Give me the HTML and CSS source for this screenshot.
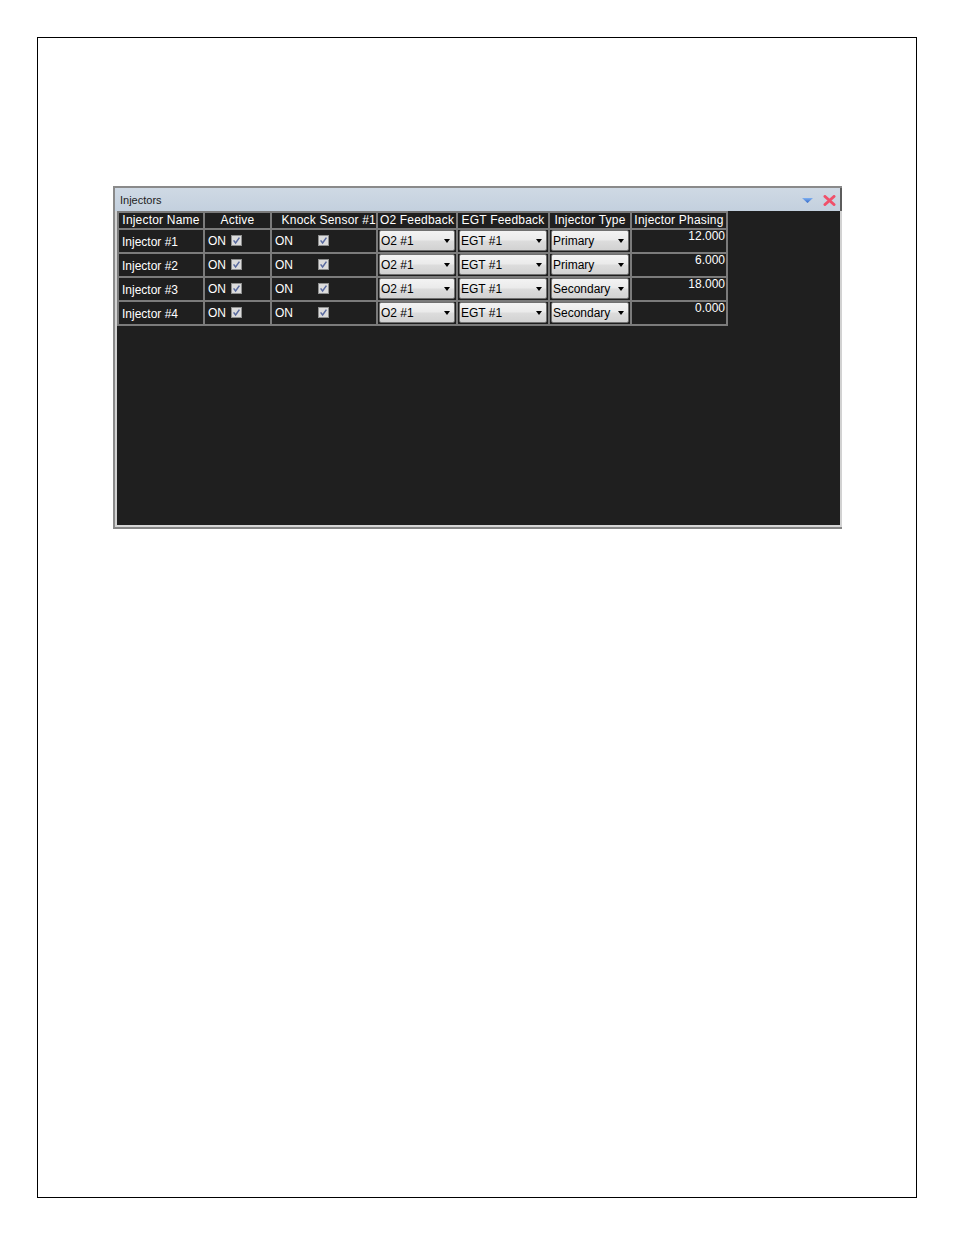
FILE: index.html
```html
<!DOCTYPE html>
<html>
<head>
<meta charset="utf-8">
<title>Injectors</title>
<link rel="stylesheet" href="styles.css">
</head>
<body>
<div class="page">
  <div class="window">
    <div class="titlebar">
      <span class="title">Injectors</span>
      <div class="tools">
        <svg class="ico-min" width="11" height="5" viewBox="0 0 11 5"><defs><linearGradient id="bl" x1="0" y1="0" x2="0" y2="1"><stop offset="0" stop-color="#7fb0f0"/><stop offset="1" stop-color="#2f66c8"/></linearGradient></defs><path d="M0 0 H11 L5.5 5 Z" fill="url(#bl)"/></svg>
        <svg class="ico-close" width="13" height="11" viewBox="0 0 13 11"><path d="M2 1.5 L11 9.5 M11 1.5 L2 9.5" stroke="#f0506a" stroke-width="3" stroke-linecap="round"/></svg>
      </div>
    </div>
    <div class="body">
      <div class="grid">
        <div class="hcell">Injector Name</div>
        <div class="hcell">Active</div>
        <div class="hcell hknock">Knock Sensor #1</div>
        <div class="hcell">O2 Feedback</div>
        <div class="hcell">EGT Feedback</div>
        <div class="hcell">Injector Type</div>
        <div class="hcell">Injector Phasing</div>

        <div class="cell name">Injector #1</div>
        <div class="cell on"><span>ON</span><svg class="chk" width="11" height="11" viewBox="0 0 11 11"><rect x="0.5" y="0.5" width="10" height="10" fill="#dcdcdc" stroke="#8e8f8f"/><path d="M2.6 5.4 L4.6 8 L8.4 2.6" fill="none" stroke="#5a6ba0" stroke-width="1.5"/></svg></div>
        <div class="cell on knock"><span>ON</span><svg class="chk" width="11" height="11" viewBox="0 0 11 11"><rect x="0.5" y="0.5" width="10" height="10" fill="#dcdcdc" stroke="#8e8f8f"/><path d="M2.6 5.4 L4.6 8 L8.4 2.6" fill="none" stroke="#5a6ba0" stroke-width="1.5"/></svg></div>
        <div class="cell sel"><div class="combo"><span>O2 #1</span><i class="arrow"></i></div></div>
        <div class="cell sel"><div class="combo"><span>EGT #1</span><i class="arrow"></i></div></div>
        <div class="cell sel"><div class="combo"><span>Primary</span><i class="arrow"></i></div></div>
        <div class="cell num">12.000</div>

        <div class="cell name">Injector #2</div>
        <div class="cell on"><span>ON</span><svg class="chk" width="11" height="11" viewBox="0 0 11 11"><rect x="0.5" y="0.5" width="10" height="10" fill="#dcdcdc" stroke="#8e8f8f"/><path d="M2.6 5.4 L4.6 8 L8.4 2.6" fill="none" stroke="#5a6ba0" stroke-width="1.5"/></svg></div>
        <div class="cell on knock"><span>ON</span><svg class="chk" width="11" height="11" viewBox="0 0 11 11"><rect x="0.5" y="0.5" width="10" height="10" fill="#dcdcdc" stroke="#8e8f8f"/><path d="M2.6 5.4 L4.6 8 L8.4 2.6" fill="none" stroke="#5a6ba0" stroke-width="1.5"/></svg></div>
        <div class="cell sel"><div class="combo"><span>O2 #1</span><i class="arrow"></i></div></div>
        <div class="cell sel"><div class="combo"><span>EGT #1</span><i class="arrow"></i></div></div>
        <div class="cell sel"><div class="combo"><span>Primary</span><i class="arrow"></i></div></div>
        <div class="cell num">6.000</div>

        <div class="cell name">Injector #3</div>
        <div class="cell on"><span>ON</span><svg class="chk" width="11" height="11" viewBox="0 0 11 11"><rect x="0.5" y="0.5" width="10" height="10" fill="#dcdcdc" stroke="#8e8f8f"/><path d="M2.6 5.4 L4.6 8 L8.4 2.6" fill="none" stroke="#5a6ba0" stroke-width="1.5"/></svg></div>
        <div class="cell on knock"><span>ON</span><svg class="chk" width="11" height="11" viewBox="0 0 11 11"><rect x="0.5" y="0.5" width="10" height="10" fill="#dcdcdc" stroke="#8e8f8f"/><path d="M2.6 5.4 L4.6 8 L8.4 2.6" fill="none" stroke="#5a6ba0" stroke-width="1.5"/></svg></div>
        <div class="cell sel"><div class="combo"><span>O2 #1</span><i class="arrow"></i></div></div>
        <div class="cell sel"><div class="combo"><span>EGT #1</span><i class="arrow"></i></div></div>
        <div class="cell sel"><div class="combo"><span>Secondary</span><i class="arrow"></i></div></div>
        <div class="cell num">18.000</div>

        <div class="cell name">Injector #4</div>
        <div class="cell on"><span>ON</span><svg class="chk" width="11" height="11" viewBox="0 0 11 11"><rect x="0.5" y="0.5" width="10" height="10" fill="#dcdcdc" stroke="#8e8f8f"/><path d="M2.6 5.4 L4.6 8 L8.4 2.6" fill="none" stroke="#5a6ba0" stroke-width="1.5"/></svg></div>
        <div class="cell on knock"><span>ON</span><svg class="chk" width="11" height="11" viewBox="0 0 11 11"><rect x="0.5" y="0.5" width="10" height="10" fill="#dcdcdc" stroke="#8e8f8f"/><path d="M2.6 5.4 L4.6 8 L8.4 2.6" fill="none" stroke="#5a6ba0" stroke-width="1.5"/></svg></div>
        <div class="cell sel"><div class="combo"><span>O2 #1</span><i class="arrow"></i></div></div>
        <div class="cell sel"><div class="combo"><span>EGT #1</span><i class="arrow"></i></div></div>
        <div class="cell sel"><div class="combo"><span>Secondary</span><i class="arrow"></i></div></div>
        <div class="cell num">0.000</div>
      </div>
    </div>
  </div>
</div>
</body>
</html>
```

FILE: styles.css
```css
html, body {
  margin: 0;
  padding: 0;
  background: #ffffff;
}

body {
  font-family: "Liberation Sans", Arial, sans-serif;
}

.page {
  margin: 37px 0 0 37px;
  width: 878px;
  height: 1159px;
  border: 1px solid #000000;
  overflow: hidden;
}

.window {
  margin: 148px 0 0 75px;
  width: 727px;
  border-top: 2px solid #8a8a8a;
  border-left: 2px solid #8a8a8a;
  border-bottom: 2px solid #858585;
  box-sizing: content-box;
}

.titlebar {
  height: 23px;
  background: linear-gradient(#cfd9e4, #c3d0de);
  border-right: 2px solid #5c5c5c;
  display: flex;
  align-items: center;
  justify-content: space-between;
  padding: 0 0 0 5px;
}

.title {
  font-size: 11px;
  color: #1c1c1c;
  padding-top: 1px;
}

.tools {
  display: flex;
  align-items: center;
  gap: 10px;
  padding-right: 4px;
  padding-top: 1px;
}

.ico-min {
  display: block;
  margin-top: 1px;
}

.ico-close {
  display: block;
}

.body {
  height: 314px;
  background: #1f1f1f;
  border-left: 2px solid #d2d2d2;
  border-right: 2px solid #d2d2d2;
  border-bottom: 2px solid #d6d6d6;
}

.grid {
  display: inline-grid;
  grid-template-columns: 84px 65px 104px 78px 90px 80px 94px;
  grid-template-rows: 15px 22px 22px 22px 22px;
  gap: 2px;
  padding: 2px;
  background: #7b7b7b;
  vertical-align: top;
}

.hcell {
  background: #1f1f1f;
  color: #ffffff;
  font-size: 12px;
  line-height: 15px;
  letter-spacing: 0.2px;
  text-align: center;
  white-space: nowrap;
  overflow: hidden;
}

.hknock {
  text-align: right;
  padding-right: 0;
}

.cell {
  background: #1f1f1f;
  color: #ffffff;
  font-size: 12px;
  white-space: nowrap;
  display: flex;
  align-items: center;
}

.name {
  padding-left: 3px;
  padding-top: 2px;
}

.on {
  padding-left: 3px;
  gap: 5px;
}

.on span {
  width: 18px;
}

.knock span {
  width: 38px;
}

.chk {
  display: block;
  margin-top: -2px;
}

.sel {
  padding: 0 1px 1px 1px;
  align-items: stretch;
}

.combo {
  flex: 1;
  display: flex;
  align-items: center;
  justify-content: space-between;
  border: 1px solid #707070;
  border-radius: 2px;
  background: linear-gradient(#f3f3f3 0%, #ebebeb 45%, #dcdcdc 55%, #d2d2d2 100%);
  color: #000000;
  padding: 0 4px 0 1px;
  font-size: 12px;
}

.arrow {
  width: 0;
  height: 0;
  border-left: 3px solid transparent;
  border-right: 3px solid transparent;
  border-top: 4px solid #000000;
}

.num {
  justify-content: flex-end;
  align-items: flex-start;
  padding-right: 1px;
  line-height: 13px;
  padding-top: 0;
}
```
